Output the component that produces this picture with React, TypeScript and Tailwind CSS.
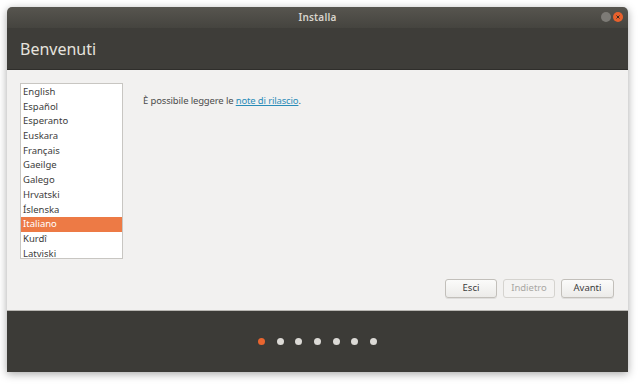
import React from "react";

const languages = [
  "English",
  "Español",
  "Esperanto",
  "Euskara",
  "Français",
  "Gaeilge",
  "Galego",
  "Hrvatski",
  "Íslenska",
  "Italiano",
  "Kurdî",
  "Latviski",
];

const font = { fontFamily: '"Noto Sans", "DejaVu Sans", sans-serif' };

export default function App() {
  const selected = "Italiano";

  return (
    <div className="w-[640px] h-[384px] bg-white pt-[7px] pl-[7px] overflow-hidden" style={font}>
      <div className="w-[621px] h-[365px] flex flex-col rounded-t-[5px] overflow-hidden shadow-[0_2px_8px_rgba(0,0,0,0.35)]">
        {/* Title bar */}
        <div className="relative h-[21px] flex items-center justify-center bg-gradient-to-b from-[#57554f] to-[#45443f]">
          <span className="text-[10px] font-semibold text-[#d8d4cc] tracking-[0.2px]">Installa</span>
          <div className="absolute right-[5px] top-[5px] flex gap-[2px]">
            <span className="w-[10px] h-[10px] rounded-full bg-[#7d7b76]" />
            <span className="w-[10px] h-[10px] rounded-full bg-[#e9612d] flex items-center justify-center">
              <svg width="6" height="6" viewBox="0 0 6 6">
                <path d="M1.5 1.5 L4.5 4.5 M4.5 1.5 L1.5 4.5" stroke="#3c2a20" strokeWidth="1" />
              </svg>
            </span>
          </div>
        </div>

        {/* Header */}
        <div className="h-[42px] bg-[#3e3d39] flex items-center pl-[13px] border-b border-[#2f2e2b]">
          <h1 className="text-[16px] text-[#e6e3de] leading-none pt-[1px]">Benvenuti</h1>
        </div>

        {/* Content */}
        <div className="flex-1 bg-[#f2f1f0] flex flex-col">
          <div className="flex flex-1 pt-[13px] pl-[13px]">
            <div className="w-[103px] h-[176px] pt-[1px] bg-white border border-[#c8c6c2] overflow-hidden">
              {languages.map((l) => (
                <div
                  key={l}
                  className={
                    "h-[14.7px] pl-[2px] text-[9.5px] leading-[14.7px] " +
                    (l === selected ? "bg-[#ed7a45] text-white" : "text-[#3c3c3c]")
                  }
                >
                  {l}
                </div>
              ))}
            </div>
            <p className="ml-[20px] mt-[11px] text-[9.5px] tracking-[-0.15px] text-[#4c4c4c]">
              È possibile leggere le{" "}
              <span className="text-[#2a8cb8] underline">note di rilascio</span>.
            </p>
          </div>
          <div className="flex justify-end gap-[6px] pr-[14px] pb-[12px]">
            <button className="w-[52px] h-[19px] rounded-[3px] border border-[#c2bfba] bg-gradient-to-b from-[#fbfbfa] to-[#ecebe9] text-[9.5px] text-[#3c3c3c] shadow-[0_1px_0_rgba(0,0,0,0.08)]">
              Esci
            </button>
            <button className="w-[52px] h-[19px] rounded-[3px] border border-[#d5d3cf] bg-[#f4f3f2] text-[9.5px] text-[#a9a7a3]">
              Indietro
            </button>
            <button className="w-[53px] h-[19px] rounded-[3px] border border-[#c2bfba] bg-gradient-to-b from-[#fbfbfa] to-[#ecebe9] text-[9.5px] text-[#3c3c3c] shadow-[0_1px_0_rgba(0,0,0,0.08)]">
              Avanti
            </button>
          </div>
        </div>

        {/* Footer */}
        <div className="h-[62px] bg-[#3c3b37] flex items-center justify-center gap-[11.6px] border-t border-[#b9b7b3]">
          {Array.from({ length: 7 }).map((_, i) => (
            <span
              key={i}
              className={
                "w-[7px] h-[7px] rounded-full " + (i === 0 ? "bg-[#e9652f]" : "bg-[#dcdad6]")
              }
            />
          ))}
        </div>
      </div>
    </div>
  );
}
